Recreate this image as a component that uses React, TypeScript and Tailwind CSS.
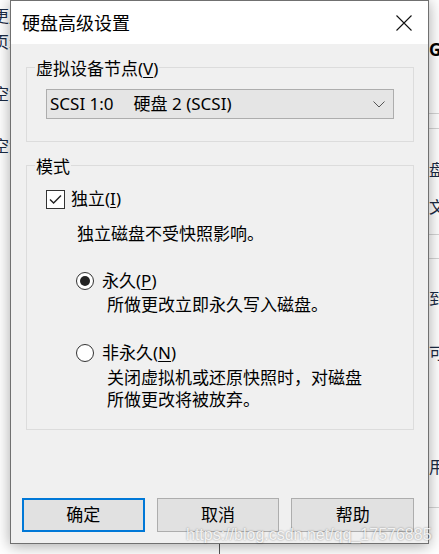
const FONT = "font-['Noto_Sans','Noto_Sans_CJK_SC',sans-serif]";

function Mnemonic({ label, letter }: { label: string; letter: string }) {
  return (
    <span>
      {label}(<span className="underline underline-offset-[2px]">{letter}</span>)
    </span>
  );
}

function CloseIcon() {
  return (
    <svg width="16" height="16" viewBox="0 0 16 16" className="block">
      <path d="M0.5 0.5 L15.5 15.5 M15.5 0.5 L0.5 15.5" stroke="#111" strokeWidth="1.1" fill="none" />
    </svg>
  );
}

function Checkbox({ checked }: { checked: boolean }) {
  return (
    <span className="flex h-[19px] w-[19px] shrink-0 items-center justify-center border border-[#333] bg-white">
      {checked && (
        <svg width="13" height="11" viewBox="0 0 13 11">
          <path d="M1 5.5 L4.6 9 L12 1.5" stroke="#222" strokeWidth="1.4" fill="none" />
        </svg>
      )}
    </span>
  );
}

function Radio({ checked }: { checked: boolean }) {
  return (
    <span className="flex h-[18px] w-[18px] shrink-0 items-center justify-center rounded-full border border-[#333] bg-white">
      {checked && <span className="h-[10px] w-[10px] rounded-full bg-[#222]" />}
    </span>
  );
}

function GroupBox({
  title,
  className,
  children,
}: {
  title: React.ReactNode;
  className: string;
  children: React.ReactNode;
}) {
  return (
    <div className={`relative border border-[#dcdcdc] ${className}`}>
      <span className="absolute left-[8px] top-[-10px] bg-[#f0f0f0] px-[1px] text-[17px] leading-[22px]">
        {title}
      </span>
      {children}
    </div>
  );
}

function Background() {
  return (
    <>
      {/* left fragments of the window behind */}
      <div className="absolute left-[-7px] top-[6px] flex flex-col text-[16px] leading-[20px] text-[#1a2a44]">
        <span>更用</span>
        <span className="mt-[6px]">页示</span>
        <span className="mt-[32px]">空测</span>
        <span className="mt-[32px]">空测</span>
      </div>
      {/* right fragments */}
      <span className="absolute left-[429px] top-[40px] text-[17px] font-bold leading-[20px] text-black">GI</span>
      <span className="absolute left-[429px] top-[160px] text-[16px] leading-[20px] text-[#1a2a44]">盘</span>
      <span className="absolute left-[429px] top-[197px] text-[16px] leading-[20px] text-[#1a2a44]">文</span>
      <span className="absolute left-[429px] top-[289px] text-[16px] leading-[20px] text-[#1a2a44]">到</span>
      <span className="absolute left-[429px] top-[343px] text-[16px] leading-[20px] text-[#1a2a44]">可</span>
      <span className="absolute left-[429px] top-[457px] text-[16px] leading-[20px] text-[#1a2a44]">用</span>
      <div className="absolute left-[429px] top-[113px] h-px w-[10px] bg-[#d5d5d5]" />
      <div className="absolute left-[429px] top-[128px] h-px w-[10px] bg-[#d5d5d5]" />
      <div className="absolute left-[429px] top-[234px] h-px w-[10px] bg-[#d5d5d5]" />
      <div className="absolute left-[429px] top-[258px] h-px w-[10px] bg-[#d5d5d5]" />
      <div className="absolute left-[429px] top-[507px] h-px w-[10px] bg-[#d5d5d5]" />
      <div className="absolute left-[219px] top-[544px] h-[10px] w-px bg-[#555]" />
    </>
  );
}

export default function App() {
  return (
    <div className={`relative h-[554px] w-[439px] overflow-hidden bg-white text-black ${FONT}`}>
      <Background />

      <div className="absolute left-[10px] top-0 flex h-[544px] w-[419px] flex-col border border-[#707070] bg-[#f0f0f0] shadow-[0_2px_14px_rgba(0,0,0,0.35)]">
        <div className="flex h-[43px] items-center justify-between bg-white pl-[11px] pr-[16px]">
          <span className="text-[18px] leading-[24px]">硬盘高级设置</span>
          <CloseIcon />
        </div>

        <div className="flex flex-1 flex-col pl-[15px] pr-[14px] pt-[23px]">
          <GroupBox title={<Mnemonic label="虚拟设备节点" letter="V" />} className="h-[75px] px-[19px] pt-[21px]">
            <div className="flex h-[30px] items-center justify-between border border-[#adadad] bg-[#e5e5e5] pl-[3px] pr-[8px] text-[17px] leading-[22px]">
              <span>
                SCSI 1:0<span className="ml-[20px]">硬盘 2 (SCSI)</span>
              </span>
              <svg width="12" height="7" viewBox="0 0 12 7">
                <path d="M0.5 0.5 L6 6 L11.5 0.5" stroke="#555" strokeWidth="1" fill="none" />
              </svg>
            </div>
          </GroupBox>

          <GroupBox title="模式" className="mt-[23px] h-[265px] pl-[19px] pt-[22px]">
            <div className="flex flex-col text-[17px] leading-[22px]">
              <label className="flex items-center gap-[6px]">
                <Checkbox checked />
                <Mnemonic label="独立" letter="I" />
              </label>
              <span className="ml-[31px] mt-[13px]">独立磁盘不受快照影响。</span>

              <label className="ml-[30px] mt-[25px] flex items-center gap-[8px]">
                <Radio checked />
                <Mnemonic label="永久" letter="P" />
              </label>
              <span className="ml-[61px] mt-[2px]">所做更改立即永久写入磁盘。</span>

              <label className="ml-[30px] mt-[26px] flex items-center gap-[8px]">
                <Radio checked={false} />
                <Mnemonic label="非永久" letter="N" />
              </label>
              <span className="ml-[61px] mt-[3px]">
                关闭虚拟机或还原快照时，对磁盘
                <br />
                所做更改将被放弃。
              </span>
            </div>
          </GroupBox>

          <div className="-ml-[4px] mt-auto flex gap-[12px] pb-[11px] text-[17px]">
            <button className="h-[34px] w-[123px] border-2 border-[#0078d7] bg-[#e1e1e1]" type="button">
              确定
            </button>
            <button className="h-[34px] w-[123px] border border-[#adadad] bg-[#e1e1e1]" type="button">
              取消
            </button>
            <button className="h-[34px] w-[123px] border border-[#adadad] bg-[#e1e1e1]" type="button">
              帮助
            </button>
          </div>
        </div>
      </div>

      {/* CSDN watermark over the dialog */}
      <span className="absolute left-[186px] top-[525px] font-['Liberation_Sans',sans-serif] text-[16px] leading-[20px] text-white/85 [text-shadow:0_0_2px_rgba(0,0,0,0.45)]">
        https://blog.csdn.net/qq_17576885
      </span>
    </div>
  );
}
